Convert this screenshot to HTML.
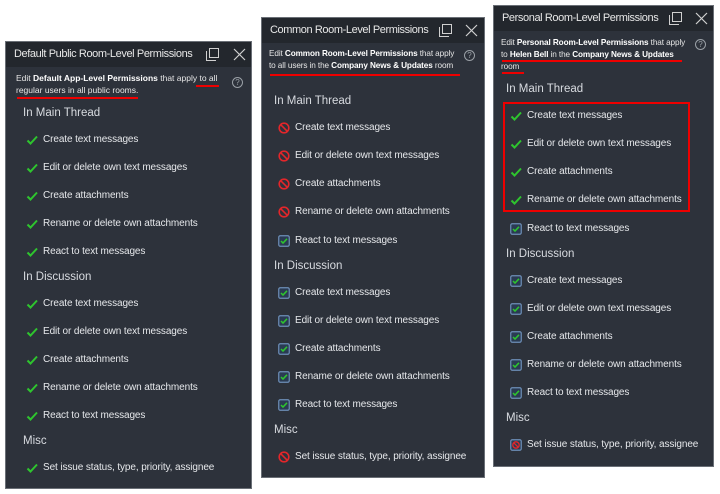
<!DOCTYPE html>
<html><head><meta charset="utf-8"><style>
*{margin:0;padding:0;box-sizing:border-box}
body{width:720px;height:494px;background:#fff;position:relative;overflow:hidden;font-family:"Liberation Sans",sans-serif;color:#e6e8eb}
.p{position:absolute;background:#2d323b;border:1px solid #6a6f76}
.h{position:absolute;left:0;right:0;top:0;height:25px;background:#23272d;font-size:11px;letter-spacing:-0.4px;line-height:25px;padding-left:8px;color:#e8e8e8;white-space:nowrap}
.h .ic{position:absolute;top:6px;width:13px;height:13px}
.d{position:absolute;font-size:8.5px;line-height:12px;color:#e6e6e6;white-space:nowrap}
.d.n{font-size:8.2px;letter-spacing:-0.1px}
.d b{font-weight:bold;color:#fff}
.q{position:absolute;width:11px;height:11px;border:1px solid #9aa0a6;border-radius:50%;font-size:8px;line-height:9px;text-align:center;color:#9aa0a6}
.s{position:absolute;font-size:11.5px;color:#d8dbe0}
.r{position:absolute;font-size:10px;line-height:14px;color:#e6e8eb;white-space:nowrap;letter-spacing:-0.1px}
.r svg{position:absolute;left:0;top:1px}
.ul{position:absolute;height:2px;background:#e00}
</style></head><body>
<svg width="0" height="0" style="position:absolute">
<defs>
<symbol id="ck" viewBox="0 0 12 12"><path d="M1.5 6.5 L4.5 9.5 L11 2.5" fill="none" stroke="#2ec52e" stroke-width="2"/></symbol>
<symbol id="no" viewBox="0 0 12 12"><circle cx="6" cy="6" r="4.8" fill="none" stroke="#e3262a" stroke-width="1.6"/><path d="M2.7 2.7 L9.3 9.3" stroke="#e3262a" stroke-width="1.6"/></symbol>
<symbol id="bx" viewBox="0 0 12 12"><rect x="0.75" y="0.75" width="10.5" height="10.5" rx="1.5" fill="#2a3b52" stroke="#6d8fb8" stroke-width="1.2"/><path d="M3 6 L5 8 L9 3.8" fill="none" stroke="#2ec52e" stroke-width="1.5"/></symbol>
<symbol id="bn" viewBox="0 0 12 12"><rect x="0.75" y="0.75" width="10.5" height="10.5" rx="1.5" fill="#2a3b52" stroke="#6d8fb8" stroke-width="1.2"/><circle cx="6" cy="6" r="3.2" fill="none" stroke="#e3262a" stroke-width="1.3"/><path d="M3.8 3.8 L8.2 8.2" stroke="#e3262a" stroke-width="1.3"/></symbol>
<symbol id="mx" viewBox="0 0 13 13"><rect x="3.5" y="0.5" width="9" height="9" fill="none" stroke="#d0d0d0"/><path d="M0.5 3 V12.5 H10" fill="none" stroke="#d0d0d0"/></symbol>
<symbol id="cl" viewBox="0 0 13 13"><path d="M1 1 L12 12 M12 1 L1 12" stroke="#d0d0d0" stroke-width="1.2"/></symbol>
</defs></svg>

<!-- Panel 1 -->
<div class="p" style="left:5px;top:41px;width:247px;height:448px">
<div class="h">Default Public Room-Level Permissions
<svg class="ic" style="left:200px"><use href="#mx"/></svg><svg class="ic" style="left:227px"><use href="#cl"/></svg></div>
<div class="d" style="left:10px;top:30px">Edit <b>Default App-Level Permissions</b> that apply to all<br>regular users in all public rooms.</div>
<div class="ul" style="left:190px;top:43px;width:23px"></div>
<div class="ul" style="left:11px;top:55px;width:121px"></div>
<div class="q" style="left:226px;top:35px">?</div>
<div class="s" style="left:17px;top:65px">In Main Thread</div>
<div class="r" style="left:20px;top:91px"><svg width="12" height="12"><use href="#ck"/></svg><span style="margin-left:17px">Create text messages</span></div>
<div class="r" style="left:20px;top:119px"><svg width="12" height="12"><use href="#ck"/></svg><span style="margin-left:17px">Edit or delete own text messages</span></div>
<div class="r" style="left:20px;top:147px"><svg width="12" height="12"><use href="#ck"/></svg><span style="margin-left:17px">Create attachments</span></div>
<div class="r" style="left:20px;top:175px"><svg width="12" height="12"><use href="#ck"/></svg><span style="margin-left:17px">Rename or delete own attachments</span></div>
<div class="r" style="left:20px;top:203px"><svg width="12" height="12"><use href="#ck"/></svg><span style="margin-left:17px">React to text messages</span></div>
<div class="s" style="left:17px;top:229px">In Discussion</div>
<div class="r" style="left:20px;top:255px"><svg width="12" height="12"><use href="#ck"/></svg><span style="margin-left:17px">Create text messages</span></div>
<div class="r" style="left:20px;top:283px"><svg width="12" height="12"><use href="#ck"/></svg><span style="margin-left:17px">Edit or delete own text messages</span></div>
<div class="r" style="left:20px;top:311px"><svg width="12" height="12"><use href="#ck"/></svg><span style="margin-left:17px">Create attachments</span></div>
<div class="r" style="left:20px;top:339px"><svg width="12" height="12"><use href="#ck"/></svg><span style="margin-left:17px">Rename or delete own attachments</span></div>
<div class="r" style="left:20px;top:367px"><svg width="12" height="12"><use href="#ck"/></svg><span style="margin-left:17px">React to text messages</span></div>
<div class="s" style="left:17px;top:393px">Misc</div>
<div class="r" style="left:20px;top:419px"><svg width="12" height="12"><use href="#ck"/></svg><span style="margin-left:17px">Set issue status, type, priority, assignee</span></div>
</div>

<!-- Panel 2 -->
<div class="p" style="left:261px;top:17px;width:224px;height:461px">
<div class="h">Common Room-Level Permissions
<svg class="ic" style="left:177px"><use href="#mx"/></svg><svg class="ic" style="left:203px"><use href="#cl"/></svg></div>
<div class="d n" style="left:7px;top:30px">Edit <b>Common Room-Level Permissions</b> that apply<br>to all users in the <b>Company News &amp; Updates</b> room</div>
<div class="ul" style="left:8px;top:56px;width:190px"></div>
<div class="q" style="left:202px;top:32px">?</div>
<div class="s" style="left:12px;top:77px">In Main Thread</div>
<div class="r" style="left:16px;top:103px"><svg width="12" height="12"><use href="#no"/></svg><span style="margin-left:17px">Create text messages</span></div>
<div class="r" style="left:16px;top:131px"><svg width="12" height="12"><use href="#no"/></svg><span style="margin-left:17px">Edit or delete own text messages</span></div>
<div class="r" style="left:16px;top:159px"><svg width="12" height="12"><use href="#no"/></svg><span style="margin-left:17px">Create attachments</span></div>
<div class="r" style="left:16px;top:187px"><svg width="12" height="12"><use href="#no"/></svg><span style="margin-left:17px">Rename or delete own attachments</span></div>
<div class="r" style="left:16px;top:216px"><svg width="12" height="12"><use href="#bx"/></svg><span style="margin-left:17px">React to text messages</span></div>
<div class="s" style="left:12px;top:242px">In Discussion</div>
<div class="r" style="left:16px;top:268px"><svg width="12" height="12"><use href="#bx"/></svg><span style="margin-left:17px">Create text messages</span></div>
<div class="r" style="left:16px;top:296px"><svg width="12" height="12"><use href="#bx"/></svg><span style="margin-left:17px">Edit or delete own text messages</span></div>
<div class="r" style="left:16px;top:324px"><svg width="12" height="12"><use href="#bx"/></svg><span style="margin-left:17px">Create attachments</span></div>
<div class="r" style="left:16px;top:352px"><svg width="12" height="12"><use href="#bx"/></svg><span style="margin-left:17px">Rename or delete own attachments</span></div>
<div class="r" style="left:16px;top:380px"><svg width="12" height="12"><use href="#bx"/></svg><span style="margin-left:17px">React to text messages</span></div>
<div class="s" style="left:12px;top:406px">Misc</div>
<div class="r" style="left:16px;top:432px"><svg width="12" height="12"><use href="#no"/></svg><span style="margin-left:17px">Set issue status, type, priority, assignee</span></div>
</div>

<!-- Panel 3 -->
<div class="p" style="left:493px;top:5px;width:221px;height:462px">
<div class="h">Personal Room-Level Permissions
<svg class="ic" style="left:175px"><use href="#mx"/></svg><svg class="ic" style="left:201px"><use href="#cl"/></svg></div>
<div class="d n" style="left:7px;top:31px">Edit <b>Personal Room-Level Permissions</b> that apply<br>to <b>Helen Bell</b> in the <b>Company News &amp; Updates</b><br>room</div>
<div class="ul" style="left:8px;top:54px;width:180px"></div>
<div class="ul" style="left:8px;top:66px;width:22px"></div>
<div class="q" style="left:201px;top:33px">?</div>
<div class="s" style="left:12px;top:77px">In Main Thread</div>
<div style="position:absolute;left:9px;top:96px;width:187px;height:110px;border:2px solid #e00"></div>
<div class="r" style="left:16px;top:103px"><svg width="12" height="12"><use href="#ck"/></svg><span style="margin-left:17px">Create text messages</span></div>
<div class="r" style="left:16px;top:131px"><svg width="12" height="12"><use href="#ck"/></svg><span style="margin-left:17px">Edit or delete own text messages</span></div>
<div class="r" style="left:16px;top:159px"><svg width="12" height="12"><use href="#ck"/></svg><span style="margin-left:17px">Create attachments</span></div>
<div class="r" style="left:16px;top:187px"><svg width="12" height="12"><use href="#ck"/></svg><span style="margin-left:17px">Rename or delete own attachments</span></div>
<div class="r" style="left:16px;top:216px"><svg width="12" height="12"><use href="#bx"/></svg><span style="margin-left:17px">React to text messages</span></div>
<div class="s" style="left:12px;top:242px">In Discussion</div>
<div class="r" style="left:16px;top:268px"><svg width="12" height="12"><use href="#bx"/></svg><span style="margin-left:17px">Create text messages</span></div>
<div class="r" style="left:16px;top:296px"><svg width="12" height="12"><use href="#bx"/></svg><span style="margin-left:17px">Edit or delete own text messages</span></div>
<div class="r" style="left:16px;top:324px"><svg width="12" height="12"><use href="#bx"/></svg><span style="margin-left:17px">Create attachments</span></div>
<div class="r" style="left:16px;top:352px"><svg width="12" height="12"><use href="#bx"/></svg><span style="margin-left:17px">Rename or delete own attachments</span></div>
<div class="r" style="left:16px;top:380px"><svg width="12" height="12"><use href="#bx"/></svg><span style="margin-left:17px">React to text messages</span></div>
<div class="s" style="left:12px;top:406px">Misc</div>
<div class="r" style="left:16px;top:432px"><svg width="12" height="12"><use href="#bn"/></svg><span style="margin-left:17px">Set issue status, type, priority, assignee</span></div>
</div>
</body></html>
